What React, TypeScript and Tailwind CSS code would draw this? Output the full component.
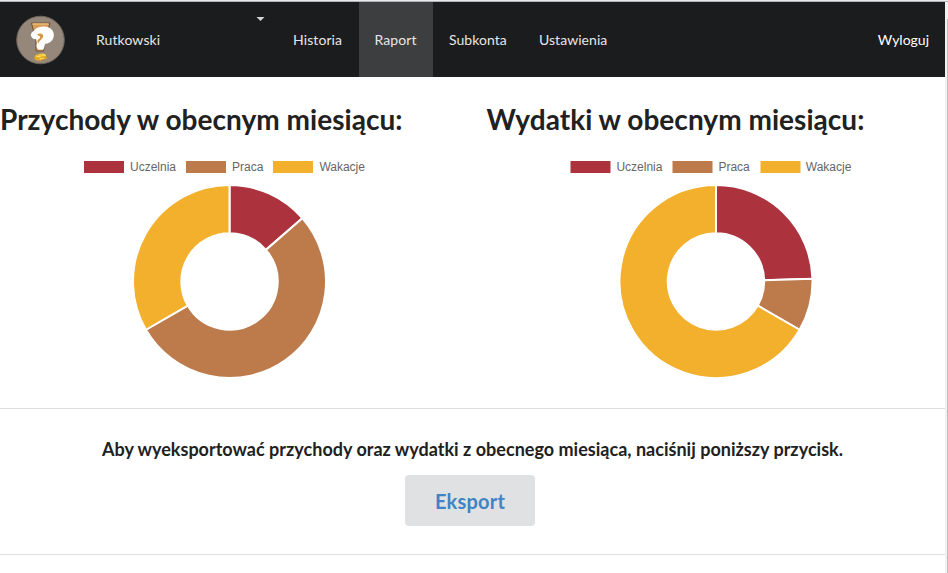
type Slice = { label: string; color: string; from: number; to: number };

const RED = '#ac333d';
const BROWN = '#bd7b4b';
const YELLOW = '#f2b02c';

const income: Slice[] = [
  { label: 'Uczelnia', color: RED, from: 0, to: 49 },
  { label: 'Praca', color: BROWN, from: 49, to: 240 },
  { label: 'Wakacje', color: YELLOW, from: 240, to: 360 },
];
const expenses: Slice[] = [
  { label: 'Uczelnia', color: RED, from: 0, to: 88.4 },
  { label: 'Praca', color: BROWN, from: 88.4, to: 120 },
  { label: 'Wakacje', color: YELLOW, from: 120, to: 360 },
];

function slicePath(from: number, to: number) {
  const outer = 96.5;
  const inner = 48.2;
  const point = (r: number, deg: number) => {
    const a = (deg * Math.PI) / 180;
    return `${(r * Math.sin(a)).toFixed(3)} ${(-r * Math.cos(a)).toFixed(3)}`;
  };
  const large = to - from > 180 ? 1 : 0;
  return `M${point(outer, from)} A${outer} ${outer} 0 ${large} 1 ${point(outer, to)} L${point(inner, to)} A${inner} ${inner} 0 ${large} 0 ${point(inner, from)} Z`;
}

function Chart({ title, slices, shift = 0 }: { title: string; slices: Slice[]; shift?: number }) {
  return (
    <section className="w-[486.4px] shrink-0">
      <h1 className="h-9 whitespace-nowrap text-[28px] leading-9 font-bold tracking-[0.035px] text-[#212121]">{title}</h1>
      <div className="mt-6 ml-[84px] flex h-3 items-center">
        {slices.map((s) => (
          <div key={s.label} className="flex items-center pr-[10px] font-['Liberation_Sans',Arial,sans-serif] text-xs leading-3 text-[#666]">
            <svg className="mr-1.5 h-3 w-10 overflow-visible" viewBox="0 0 40 12">
              <rect x={shift} width="40" height="12" fill={s.color} />
            </svg>
            {s.label}
          </div>
        ))}
      </div>
      <svg className="mt-[10px] ml-[131px] block h-[197px] w-[197px] overflow-visible" viewBox="-98.5 -98.5 197 197">
        <g transform={`translate(${shift} 0)`}>
          {slices.map((s) => (
            <path key={s.label} d={slicePath(s.from, s.to)} fill={s.color} stroke="#fff" strokeWidth="2" />
          ))}
        </g>
      </svg>
    </section>
  );
}

function Logo() {
  return (
    <svg className="h-[50px] w-[50px]" viewBox="0 0 50 50">
      <circle cx="25.5" cy="25" r="23.800" fill="#95877a" stroke="#6b625b" strokeWidth="1" />
      <path d="M16.500 8 H35 L33.500 13 L30 24 L28.500 36 H21 L21 26 L18 14Z" fill="#d89c59" stroke="#69513d" strokeWidth="1" />
      <path d="M17.500 9h16" stroke="#eeb873" strokeWidth="1.500" />
      <path
        d="M20 19.500 C22 16.800 30.500 17 30 21 C29.500 24.500 25.800 24.500 25.500 30"
        transform="translate(0 .5)"
        fill="none"
        stroke="#fff"
        strokeWidth="8"
        strokeLinecap="round"
        strokeLinejoin="round"
      />
      <path d="M19 15.500 C23 10.500 34 10 37.500 15.500 C41 21 37.500 28.500 29.500 29 L28.500 34.500 H23 L22 28Z" fill="#fff" />
      <path d="M21.500 20 C24 17.300 28.500 18.200 28.200 21.200 C27.700 24.200 25 24.500 23.300 28.500 C21.500 26.500 22.300 24.500 25 23 C25.500 20.800 23.500 20.200 21.500 20Z" fill="#d89648" />
      <ellipse cx="24" cy="42.500" rx="4.500" ry="3.200" fill="#e7ac20" />
      <ellipse cx="27" cy="40.500" rx="4" ry="2" fill="#f5cb3b" />
      <ellipse cx="29" cy="42.800" rx="3.200" ry="1.600" fill="#dba122" />
      <path d="M21 41l4 1m0 2l4-1m-2-3h3" stroke="#ffe173" strokeWidth="1" />
    </svg>
  );
}

export default function App() {
  return (
    <div className="flex h-[573px] w-[948px] overflow-hidden bg-white font-[Lato,'Helvetica_Neue',sans-serif] text-sm">
      <div className="w-[945px] shrink-0">
        <div className="h-0.5 border-b border-[#b0b4b7] bg-[#e8eaec]" />
        <nav className="flex h-[75px] items-center bg-[#1b1c1d] text-[#e6e6e6]">
          <div className="flex h-full w-20 items-center pl-[15px]">
            <Logo />
          </div>
          <div className="flex h-full w-[197px] items-center pl-4">
            <span className="w-[159px] tracking-[0.1px]">Rutkowski</span>
            <svg className="-mt-[41px] h-1 w-[10px]" viewBox="0 0 10 4">
              <path d="M1.500 0h8l-4 4z" fill="#d5d5d5" />
            </svg>
          </div>
          <a className="flex h-full w-[82px] items-center pl-4 tracking-[0.1px]">Historia</a>
          <a className="flex h-full w-[74px] items-center bg-[#3d3e3f] pl-[15.500px] tracking-[0.1px]">Raport</a>
          <a className="flex h-full w-[90px] items-center pl-4 tracking-[0.05px]">Subkonta</a>
          <a className="flex h-full items-center pl-4 tracking-[0.05px]">Ustawienia</a>
          <a className="ml-auto flex h-full items-center pr-4 text-white">Wyloguj</a>
        </nav>
        <main>
          <div className="flex h-[331px] overflow-hidden pt-6">
            <Chart title="Przychody w obecnym miesiącu:" slices={income} />
            <Chart title="Wydatki w obecnym miesiącu:" slices={expenses} shift={0.5} />
          </div>
          <section className="flex h-[147px] flex-col items-center border-y border-[#dedede]">
            <h3 className="mt-7 h-6 whitespace-nowrap text-[18px] leading-6 font-bold tracking-[0.012px] text-[#212121]">
              Aby wyeksportować przychody oraz wydatki z obecnego miesiąca, naciśnij poniższy przycisk.
            </h3>
            <button className="mt-3.5 mr-[5px] h-[51px] w-[130px] rounded-[4px] bg-[#e0e1e2] pt-0.5 text-[20px] font-bold tracking-[0.2px] text-[#4183c4]">
              Eksport
            </button>
          </section>
        </main>
      </div>
      <div className="flex w-[3px] flex-col">
        <div className="h-0.5 border-b border-[#b0b4b7] bg-[#e8eaec]" />
        <div className="flex flex-1 bg-[#f1f1f1]">
          <div className="mt-[17px] ml-auto w-px bg-[#c1c1c1]" />
        </div>
      </div>
    </div>
  );
}
